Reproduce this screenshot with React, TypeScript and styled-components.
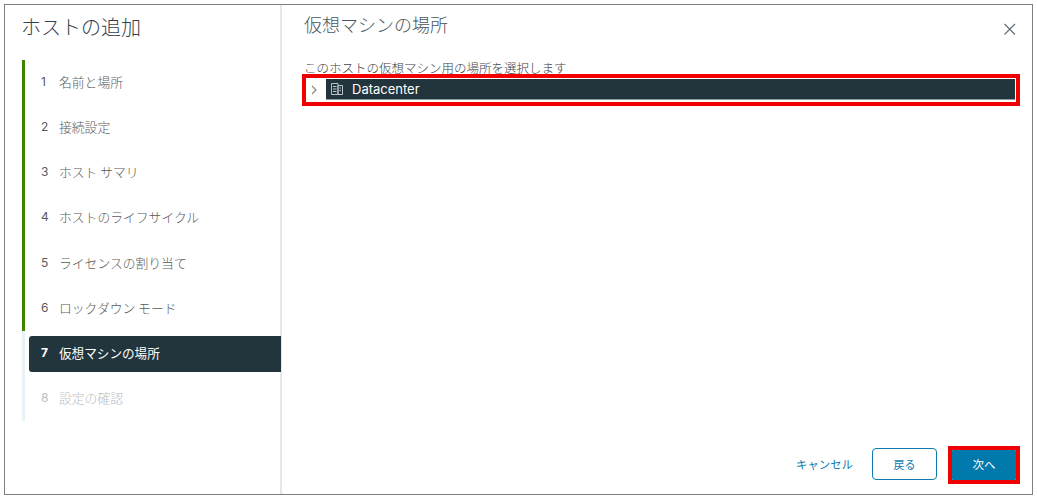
import React from "react";
import styled, { createGlobalStyle } from "styled-components";

const Global = createGlobalStyle`
  html, body { margin: 0; padding: 0; background: #fff; }
  body { font-family: "Noto Sans CJK JP", "Noto Sans", sans-serif; color: #565656; }
  * { box-sizing: border-box; }
`;

const Frame = styled.div`
  margin: 4px 0 0 4px;
  width: 1029px;
  height: 491px;
  border: 1px solid #7f7f7f;
  display: flex;
  background: #fff;
`;

const Sidebar = styled.aside`
  width: 277px;
  flex: none;
  border-right: 2px solid #e3e8ec;
  display: flex;
  flex-direction: column;
  padding-top: 7px;
`;

const SideTitle = styled.h2`
  margin: 0 0 0 16px;
  height: 48px;
  line-height: 30px;
  font-size: 20px;
  font-weight: 300;
  color: #33424e;
`;

const Steps = styled.ol`
  list-style: none;
  margin: 0 0 0 17px;
  padding: 0;
  height: 361px;
  display: grid;
  grid-template-rows: repeat(8, 1fr);
`;

const Step = styled.li<{ $state: "done" | "active" | "todo" }>`
  border-left: 3px solid ${(p) => (p.$state === "done" ? "#3c8500" : "#e9f3f7")};
  padding: 5px 0 4px 4px;
  display: flex;
  min-height: 0;
`;

const StepInner = styled.div<{ $state: "done" | "active" | "todo" }>`
  flex: 1;
  display: flex;
  align-items: center;
  padding: 0 0 3px 12px;
  margin-right: -1px;
  border-radius: 3px 0 0 3px;
  font-size: ${(p) => (p.$state === "active" ? "12.6px" : "12.8px")};
  font-weight: ${(p) => (p.$state === "active" ? 400 : 300)};
  background: ${(p) => (p.$state === "active" ? "#22343c" : "transparent")};
  color: ${(p) =>
    p.$state === "active" ? "#fff" : p.$state === "todo" ? "#b9bdc0" : "#5a5a5a"};
`;

const StepNum = styled.span<{ $bold: boolean }>`
  width: 18px;
  flex: none;
  font-family: "Inter", "Liberation Sans", sans-serif;
  font-size: 12px;
  font-weight: ${(p) => (p.$bold ? 700 : 400)};
`;

const Main = styled.main`
  flex: 1;
  min-width: 0;
  display: flex;
  flex-direction: column;
  padding: 4px 12px 0 20px;
`;

const Header = styled.div`
  display: flex;
  justify-content: space-between;
  height: 50px;
  padding: 0 3px 0 2px;
`;

const MainTitle = styled.h1`
  margin: 0;
  font-size: 18px;
  line-height: 30px;
  font-weight: 300;
  color: #4a5660;
`;

const CloseButton = styled.button`
  width: 14px;
  height: 14px;
  margin: 13px 0 0;
  padding: 0;
  border: 0;
  background: none;
  color: #5f6a72;
  display: block;
`;

const Lead = styled.p`
  margin: 0 0 0 2px;
  font-size: 12.5px;
  line-height: 18px;
  height: 15px;
  font-weight: 300;
  color: #3f3f3f;
  white-space: nowrap;
`;

const TreeFrame = styled.div`
  display: flex;
  height: 32px;
  border: 4px solid #f00000;
  padding: 1px 1px 2px 0;
`;

const Chevron = styled.span`
  width: 20px;
  flex: none;
  display: flex;
  align-items: center;
  padding-left: 5px;
  color: #8a8a8a;
`;

const TreeLabel = styled.div`
  flex: 1;
  background: #22343c;
  border-bottom: 1px solid #8c9aa0;
  display: flex;
  align-items: center;
  color: #fff;
  font-family: "Inter", "Noto Sans", sans-serif;
  font-size: 13px;
  padding-left: 4px;
  gap: 8px;
`;

const Spacer = styled.div`
  flex: 1;
`;

const Footer = styled.div`
  display: flex;
  justify-content: flex-end;
  align-items: center;
  gap: 11px;
  height: 38px;
  margin-bottom: 10px;
`;

const LinkButton = styled.button`
  border: 0;
  background: none;
  padding: 0 0 2px;
  margin-right: 8px;
  font: inherit;
  font-size: 11.4px;
  font-weight: 400;
  color: #0f7bac;
`;

const OutlineButton = styled.button`
  width: 65px;
  height: 32px;
  margin-bottom: 2px;
  padding: 0 0 1px;
  border: 1px solid #0f7bac;
  border-radius: 4px;
  background: #fff;
  font: inherit;
  font-size: 11px;
  color: #0f7bac;
`;

const Highlight = styled.div`
  border: 4px solid #f00000;
  display: flex;
`;

const PrimaryButton = styled.button`
  width: 64px;
  height: 30px;
  padding: 0 0 2px;
  border: 0;
  border-radius: 1px;
  background: #0079ad;
  font: inherit;
  font-size: 11.5px;
  color: #fff;
`;

const steps = [
  "名前と場所",
  "接続設定",
  "ホスト サマリ",
  "ホストのライフサイクル",
  "ライセンスの割り当て",
  "ロックダウン モード",
  "仮想マシンの場所",
  "設定の確認",
];

export default function App() {
  return (
    <>
      <Global />
      <Frame>
        <Sidebar>
          <SideTitle>ホストの追加</SideTitle>
          <Steps>
            {steps.map((s, i) => {
              const state = i < 6 ? "done" : i === 6 ? "active" : "todo";
              return (
                <Step key={s} $state={state}>
                  <StepInner $state={state}>
                    <StepNum $bold={state === "active"}>{i + 1}</StepNum>
                    {s}
                  </StepInner>
                </Step>
              );
            })}
          </Steps>
        </Sidebar>
        <Main>
          <Header>
            <MainTitle>仮想マシンの場所</MainTitle>
            <CloseButton aria-label="閉じる">
              <svg width="14" height="14" viewBox="0 0 14 14" fill="none" stroke="currentColor" strokeWidth="1.1">
                <path d="M1.5 2l10.5 10.5M12 2L1.5 12.5" />
              </svg>
            </CloseButton>
          </Header>
          <Lead>このホストの仮想マシン用の場所を選択します</Lead>
          <TreeFrame>
            <Chevron>
              <svg width="6" height="10" viewBox="0 0 6 10" fill="none" stroke="currentColor" strokeWidth="1.2">
                <path d="M1 1l4 4-4 4" />
              </svg>
            </Chevron>
            <TreeLabel>
              <svg width="14" height="14" viewBox="0 0 14 14" fill="none" stroke="#b9c4c9" strokeWidth="1">
                <path d="M1.5 1.5h6.5v11h-6.5zM8 3.5h4.5v9H8zM3 4.5h3.5M3 7h3.5M3 9.5h3.5M9.5 6h1.5M9.5 8.5h1.5" />
              </svg>
              Datacenter
            </TreeLabel>
          </TreeFrame>
          <Spacer />
          <Footer>
            <LinkButton>キャンセル</LinkButton>
            <OutlineButton>戻る</OutlineButton>
            <Highlight>
              <PrimaryButton>次へ</PrimaryButton>
            </Highlight>
          </Footer>
        </Main>
      </Frame>
    </>
  );
}
